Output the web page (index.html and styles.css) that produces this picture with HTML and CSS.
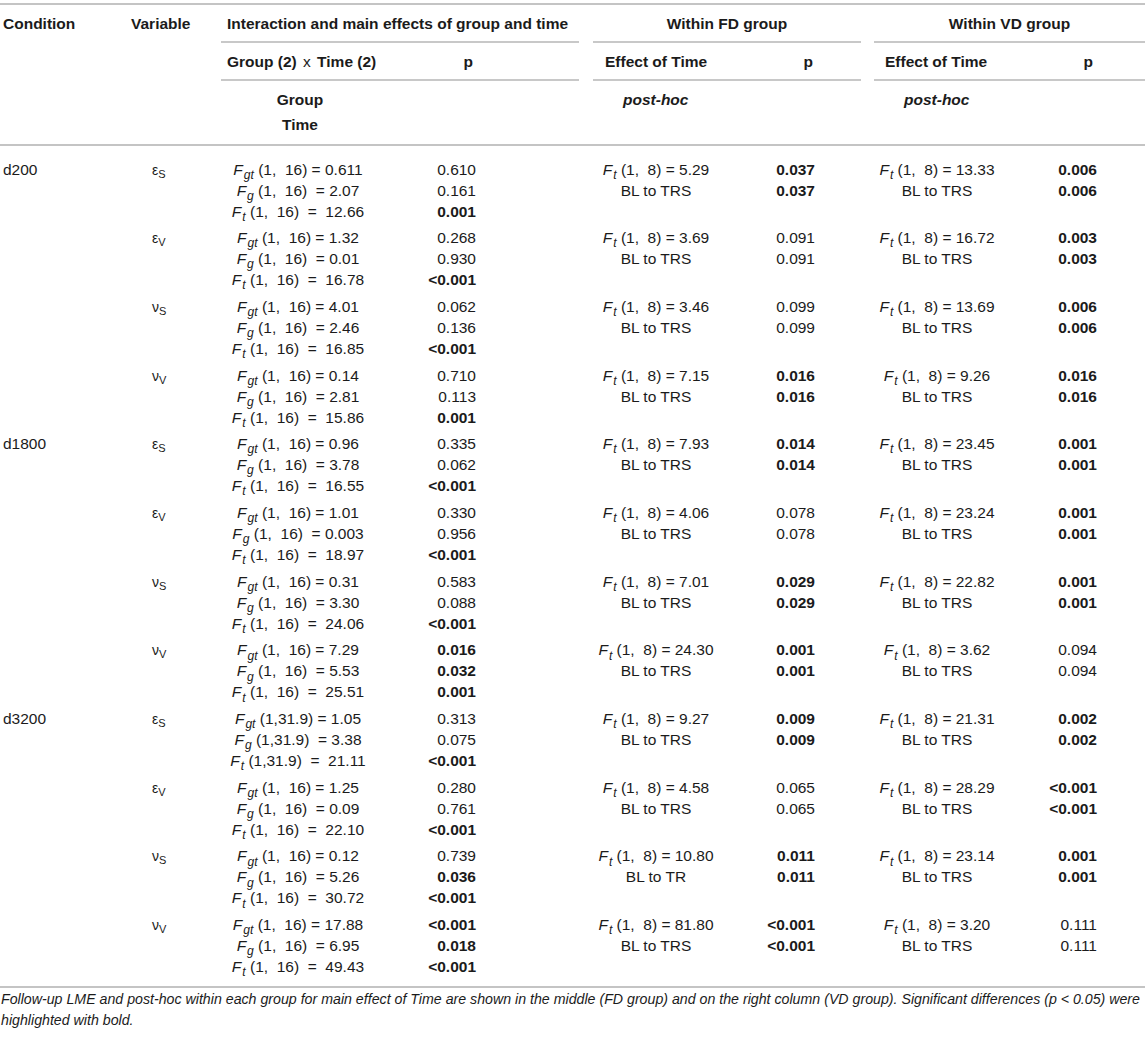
FILE: index.html
```html
<!DOCTYPE html>
<html lang="en">
<head>
<meta charset="utf-8">
<title>Table</title>
<link rel="stylesheet" href="styles.css">
</head>
<body>
<div class="page">
  <div class="cols head">
    <div class="h-cond">Condition</div>
    <div class="h-var">Variable</div>
    <div class="h-inter">Interaction and main effects of group and time</div>
    <div class="h-fd">Within FD group</div>
    <div class="h-vd">Within VD group</div>

    <div class="r2 r2-c3">Group (2) <span class="times">x</span> Time (2)</div>
    <div class="r2 r2-c4">p</div>
    <div class="r2 r2-c5">Effect of Time</div>
    <div class="r2 r2-c6">p</div>
    <div class="r2 r2-c7">Effect of Time</div>
    <div class="r2 r2-c8">p</div>

    <div class="r3 r3-c3"><div>Group</div><div>Time</div></div>
    <div class="r3 r3-c5">post-hoc</div>
    <div class="r3 r3-c7">post-hoc</div>
  </div>

  <div class="body">
    <!-- d200 -->
    <div class="cols grp">
      <div class="c1">d200</div>
      <div class="c2"><span class="sym">ε<sub>S</sub></span></div>
      <div class="c3">
        <div><i>F</i><sub>gt</sub> (1,&nbsp; 16) = 0.611</div>
        <div><i>F</i><sub>g</sub> (1,&nbsp; 16) &nbsp;= 2.07</div>
        <div><i>F</i><sub>t</sub> (1,&nbsp; 16) &nbsp;= &nbsp;12.66</div>
      </div>
      <div class="c4"><div>0.610</div><div>0.161</div><div><b>0.001</b></div></div>
      <div class="c5"><div><i>F</i><sub>t</sub> (1,&nbsp; 8) = 5.29</div><div>BL to TRS</div></div>
      <div class="c6"><div><b>0.037</b></div><div><b>0.037</b></div></div>
      <div class="c7"><div><i>F</i><sub>t</sub> (1,&nbsp; 8) = 13.33</div><div>BL to TRS</div></div>
      <div class="c8"><div><b>0.006</b></div><div><b>0.006</b></div></div>
    </div>
    <div class="cols grp">
      <div class="c1"></div>
      <div class="c2"><span class="sym">ε<sub>V</sub></span></div>
      <div class="c3">
        <div><i>F</i><sub>gt</sub> (1,&nbsp; 16) = 1.32</div>
        <div><i>F</i><sub>g</sub> (1,&nbsp; 16) &nbsp;= 0.01</div>
        <div><i>F</i><sub>t</sub> (1,&nbsp; 16) &nbsp;= &nbsp;16.78</div>
      </div>
      <div class="c4"><div>0.268</div><div>0.930</div><div><b>&lt;0.001</b></div></div>
      <div class="c5"><div><i>F</i><sub>t</sub> (1,&nbsp; 8) = 3.69</div><div>BL to TRS</div></div>
      <div class="c6"><div>0.091</div><div>0.091</div></div>
      <div class="c7"><div><i>F</i><sub>t</sub> (1,&nbsp; 8) = 16.72</div><div>BL to TRS</div></div>
      <div class="c8"><div><b>0.003</b></div><div><b>0.003</b></div></div>
    </div>
    <div class="cols grp">
      <div class="c1"></div>
      <div class="c2"><span class="sym">ν<sub>S</sub></span></div>
      <div class="c3">
        <div><i>F</i><sub>gt</sub> (1,&nbsp; 16) = 4.01</div>
        <div><i>F</i><sub>g</sub> (1,&nbsp; 16) &nbsp;= 2.46</div>
        <div><i>F</i><sub>t</sub> (1,&nbsp; 16) &nbsp;= &nbsp;16.85</div>
      </div>
      <div class="c4"><div>0.062</div><div>0.136</div><div><b>&lt;0.001</b></div></div>
      <div class="c5"><div><i>F</i><sub>t</sub> (1,&nbsp; 8) = 3.46</div><div>BL to TRS</div></div>
      <div class="c6"><div>0.099</div><div>0.099</div></div>
      <div class="c7"><div><i>F</i><sub>t</sub> (1,&nbsp; 8) = 13.69</div><div>BL to TRS</div></div>
      <div class="c8"><div><b>0.006</b></div><div><b>0.006</b></div></div>
    </div>
    <div class="cols grp">
      <div class="c1"></div>
      <div class="c2"><span class="sym">ν<sub>V</sub></span></div>
      <div class="c3">
        <div><i>F</i><sub>gt</sub> (1,&nbsp; 16) = 0.14</div>
        <div><i>F</i><sub>g</sub> (1,&nbsp; 16) &nbsp;= 2.81</div>
        <div><i>F</i><sub>t</sub> (1,&nbsp; 16) &nbsp;= &nbsp;15.86</div>
      </div>
      <div class="c4"><div>0.710</div><div>0.113</div><div><b>0.001</b></div></div>
      <div class="c5"><div><i>F</i><sub>t</sub> (1,&nbsp; 8) = 7.15</div><div>BL to TRS</div></div>
      <div class="c6"><div><b>0.016</b></div><div><b>0.016</b></div></div>
      <div class="c7"><div><i>F</i><sub>t</sub> (1,&nbsp; 8) = 9.26</div><div>BL to TRS</div></div>
      <div class="c8"><div><b>0.016</b></div><div><b>0.016</b></div></div>
    </div>

    <!-- d1800 -->
    <div class="cols grp">
      <div class="c1">d1800</div>
      <div class="c2"><span class="sym">ε<sub>S</sub></span></div>
      <div class="c3">
        <div><i>F</i><sub>gt</sub> (1,&nbsp; 16) = 0.96</div>
        <div><i>F</i><sub>g</sub> (1,&nbsp; 16) &nbsp;= 3.78</div>
        <div><i>F</i><sub>t</sub> (1,&nbsp; 16) &nbsp;= &nbsp;16.55</div>
      </div>
      <div class="c4"><div>0.335</div><div>0.062</div><div><b>&lt;0.001</b></div></div>
      <div class="c5"><div><i>F</i><sub>t</sub> (1,&nbsp; 8) = 7.93</div><div>BL to TRS</div></div>
      <div class="c6"><div><b>0.014</b></div><div><b>0.014</b></div></div>
      <div class="c7"><div><i>F</i><sub>t</sub> (1,&nbsp; 8) = 23.45</div><div>BL to TRS</div></div>
      <div class="c8"><div><b>0.001</b></div><div><b>0.001</b></div></div>
    </div>
    <div class="cols grp">
      <div class="c1"></div>
      <div class="c2"><span class="sym">ε<sub>V</sub></span></div>
      <div class="c3">
        <div><i>F</i><sub>gt</sub> (1,&nbsp; 16) = 1.01</div>
        <div><i>F</i><sub>g</sub> (1,&nbsp; 16) &nbsp;= 0.003</div>
        <div><i>F</i><sub>t</sub> (1,&nbsp; 16) &nbsp;= &nbsp;18.97</div>
      </div>
      <div class="c4"><div>0.330</div><div>0.956</div><div><b>&lt;0.001</b></div></div>
      <div class="c5"><div><i>F</i><sub>t</sub> (1,&nbsp; 8) = 4.06</div><div>BL to TRS</div></div>
      <div class="c6"><div>0.078</div><div>0.078</div></div>
      <div class="c7"><div><i>F</i><sub>t</sub> (1,&nbsp; 8) = 23.24</div><div>BL to TRS</div></div>
      <div class="c8"><div><b>0.001</b></div><div><b>0.001</b></div></div>
    </div>
    <div class="cols grp">
      <div class="c1"></div>
      <div class="c2"><span class="sym">ν<sub>S</sub></span></div>
      <div class="c3">
        <div><i>F</i><sub>gt</sub> (1,&nbsp; 16) = 0.31</div>
        <div><i>F</i><sub>g</sub> (1,&nbsp; 16) &nbsp;= 3.30</div>
        <div><i>F</i><sub>t</sub> (1,&nbsp; 16) &nbsp;= &nbsp;24.06</div>
      </div>
      <div class="c4"><div>0.583</div><div>0.088</div><div><b>&lt;0.001</b></div></div>
      <div class="c5"><div><i>F</i><sub>t</sub> (1,&nbsp; 8) = 7.01</div><div>BL to TRS</div></div>
      <div class="c6"><div><b>0.029</b></div><div><b>0.029</b></div></div>
      <div class="c7"><div><i>F</i><sub>t</sub> (1,&nbsp; 8) = 22.82</div><div>BL to TRS</div></div>
      <div class="c8"><div><b>0.001</b></div><div><b>0.001</b></div></div>
    </div>
    <div class="cols grp">
      <div class="c1"></div>
      <div class="c2"><span class="sym">ν<sub>V</sub></span></div>
      <div class="c3">
        <div><i>F</i><sub>gt</sub> (1,&nbsp; 16) = 7.29</div>
        <div><i>F</i><sub>g</sub> (1,&nbsp; 16) &nbsp;= 5.53</div>
        <div><i>F</i><sub>t</sub> (1,&nbsp; 16) &nbsp;= &nbsp;25.51</div>
      </div>
      <div class="c4"><div><b>0.016</b></div><div><b>0.032</b></div><div><b>0.001</b></div></div>
      <div class="c5"><div><i>F</i><sub>t</sub> (1,&nbsp; 8) = 24.30</div><div>BL to TRS</div></div>
      <div class="c6"><div><b>0.001</b></div><div><b>0.001</b></div></div>
      <div class="c7"><div><i>F</i><sub>t</sub> (1,&nbsp; 8) = 3.62</div><div>BL to TRS</div></div>
      <div class="c8"><div>0.094</div><div>0.094</div></div>
    </div>

    <!-- d3200 -->
    <div class="cols grp">
      <div class="c1">d3200</div>
      <div class="c2"><span class="sym">ε<sub>S</sub></span></div>
      <div class="c3">
        <div><i>F</i><sub>gt</sub> (1,31.9) = 1.05</div>
        <div><i>F</i><sub>g</sub> (1,31.9) &nbsp;= 3.38</div>
        <div><i>F</i><sub>t</sub> (1,31.9) &nbsp;= &nbsp;21.11</div>
      </div>
      <div class="c4"><div>0.313</div><div>0.075</div><div><b>&lt;0.001</b></div></div>
      <div class="c5"><div><i>F</i><sub>t</sub> (1,&nbsp; 8) = 9.27</div><div>BL to TRS</div></div>
      <div class="c6"><div><b>0.009</b></div><div><b>0.009</b></div></div>
      <div class="c7"><div><i>F</i><sub>t</sub> (1,&nbsp; 8) = 21.31</div><div>BL to TRS</div></div>
      <div class="c8"><div><b>0.002</b></div><div><b>0.002</b></div></div>
    </div>
    <div class="cols grp">
      <div class="c1"></div>
      <div class="c2"><span class="sym">ε<sub>V</sub></span></div>
      <div class="c3">
        <div><i>F</i><sub>gt</sub> (1,&nbsp; 16) = 1.25</div>
        <div><i>F</i><sub>g</sub> (1,&nbsp; 16) &nbsp;= 0.09</div>
        <div><i>F</i><sub>t</sub> (1,&nbsp; 16) &nbsp;= &nbsp;22.10</div>
      </div>
      <div class="c4"><div>0.280</div><div>0.761</div><div><b>&lt;0.001</b></div></div>
      <div class="c5"><div><i>F</i><sub>t</sub> (1,&nbsp; 8) = 4.58</div><div>BL to TRS</div></div>
      <div class="c6"><div>0.065</div><div>0.065</div></div>
      <div class="c7"><div><i>F</i><sub>t</sub> (1,&nbsp; 8) = 28.29</div><div>BL to TRS</div></div>
      <div class="c8"><div><b>&lt;0.001</b></div><div><b>&lt;0.001</b></div></div>
    </div>
    <div class="cols grp">
      <div class="c1"></div>
      <div class="c2"><span class="sym">ν<sub>S</sub></span></div>
      <div class="c3">
        <div><i>F</i><sub>gt</sub> (1,&nbsp; 16) = 0.12</div>
        <div><i>F</i><sub>g</sub> (1,&nbsp; 16) &nbsp;= 5.26</div>
        <div><i>F</i><sub>t</sub> (1,&nbsp; 16) &nbsp;= &nbsp;30.72</div>
      </div>
      <div class="c4"><div>0.739</div><div><b>0.036</b></div><div><b>&lt;0.001</b></div></div>
      <div class="c5"><div><i>F</i><sub>t</sub> (1,&nbsp; 8) = 10.80</div><div>BL to TR</div></div>
      <div class="c6"><div><b>0.011</b></div><div><b>0.011</b></div></div>
      <div class="c7"><div><i>F</i><sub>t</sub> (1,&nbsp; 8) = 23.14</div><div>BL to TRS</div></div>
      <div class="c8"><div><b>0.001</b></div><div><b>0.001</b></div></div>
    </div>
    <div class="cols grp">
      <div class="c1"></div>
      <div class="c2"><span class="sym">ν<sub>V</sub></span></div>
      <div class="c3">
        <div><i>F</i><sub>gt</sub> (1,&nbsp; 16) = 17.88</div>
        <div><i>F</i><sub>g</sub> (1,&nbsp; 16) &nbsp;= 6.95</div>
        <div><i>F</i><sub>t</sub> (1,&nbsp; 16) &nbsp;= &nbsp;49.43</div>
      </div>
      <div class="c4"><div><b>&lt;0.001</b></div><div><b>0.018</b></div><div><b>&lt;0.001</b></div></div>
      <div class="c5"><div><i>F</i><sub>t</sub> (1,&nbsp; 8) = 81.80</div><div>BL to TRS</div></div>
      <div class="c6"><div><b>&lt;0.001</b></div><div><b>&lt;0.001</b></div></div>
      <div class="c7"><div><i>F</i><sub>t</sub> (1,&nbsp; 8) = 3.20</div><div>BL to TRS</div></div>
      <div class="c8"><div>0.111</div><div>0.111</div></div>
    </div>
  </div>

  <div class="foot">Follow-up LME and post-hoc within each group for main effect of Time are shown in the middle (FD group) and on the right column (VD group). Significant differences (p &lt; 0.05) were highlighted with bold.</div>
</div>
</body>
</html>
```

FILE: styles.css
```css
html, body {
  margin: 0;
  padding: 0;
  background: #ffffff;
}

body {
  color: #1b1b1b;
  font-family: "Liberation Sans", Arial, Helvetica, sans-serif;
  font-size: 15.5px;
}

.page {
  width: 1145px;
  padding-top: 3px;
}

.cols {
  display: grid;
  grid-template-columns: 128px 93px 154px 210px 142px 140px 140px 138px;
}

/* ---------- header ---------- */
.head {
  border-top: 2px solid #c4c4c4;
  border-bottom: 2px solid #c4c4c4;
  font-weight: bold;
  line-height: 20px;
  white-space: nowrap;
}

.h-cond {
  grid-column: 1;
  grid-row: 1 / 4;
  padding: 9px 0 0 3px;
}

.h-var {
  grid-column: 2;
  grid-row: 1 / 4;
  padding: 9px 0 0 3px;
}

.h-inter,
.h-fd,
.h-vd {
  grid-row: 1;
  padding-top: 9px;
  padding-bottom: 7px;
  border-bottom: 2px solid #c8c8c8;
}

.h-inter {
  grid-column: 3 / 5;
  margin-right: 6px;
  padding-left: 6px;
}

.h-fd {
  grid-column: 5 / 7;
  margin: 0 6px 0 8px;
  text-align: center;
}

.h-vd {
  grid-column: 7 / 9;
  margin-left: 7px;
  text-align: center;
}

.r2 {
  grid-row: 2;
  padding-top: 9px;
  padding-bottom: 7px;
  border-bottom: 2px solid #c8c8c8;
}

.r2-c3 { grid-column: 3; padding-left: 6px; }
.r2-c4 { grid-column: 4; margin-right: 6px; padding-right: 106px; text-align: right; }
.r2-c5 { grid-column: 5; margin-left: 8px; padding-left: 12px; }
.r2-c6 { grid-column: 6; margin-right: 6px; padding-right: 48px; text-align: right; }
.r2-c7 { grid-column: 7; margin-left: 7px; padding-left: 11px; }
.r2-c8 { grid-column: 8; padding-right: 52px; text-align: right; }

.times {
  font-weight: normal;
  padding: 0 2px;
}

.r3 {
  grid-row: 3;
  padding-top: 6px;
  padding-bottom: 7px;
  line-height: 25px;
}

.r3-c3 { grid-column: 3; padding-left: 4px; text-align: center; }
.r3-c5 { grid-column: 5 / 7; padding-left: 38px; font-style: italic; }
.r3-c7 { grid-column: 7 / 9; padding-left: 37px; font-style: italic; }

/* ---------- body ---------- */
.body {
  padding-top: 12.5px;
  padding-bottom: 2.8px;
  white-space: nowrap;
}

.grp {
  line-height: 21px;
  padding-bottom: 5.7px;
}

.c1 { padding-left: 3px; }
.c2 { padding-left: 24px; }
.c3 { text-align: center; }
.c4 { text-align: right; padding-right: 109px; }
.c5 { text-align: center; }
.c6 { text-align: right; padding-right: 52px; }
.c7 { text-align: center; }
.c8 { text-align: right; padding-right: 48px; }

.sym {
  font-size: 14px;
}

.sym sub {
  font-size: 11px;
  vertical-align: -3px;
  line-height: 0;
}

.c3 sub,
.c5 sub,
.c7 sub {
  font-size: 0.78em;
  font-style: italic;
  vertical-align: -0.35em;
  line-height: 0;
  padding-left: 1px;
}

.c3 i,
.c5 i,
.c7 i {
  font-style: italic;
}

b {
  font-weight: bold;
}

/* ---------- footer ---------- */
.foot {
  border-top: 2px solid #c4c4c4;
  padding-top: 1.5px;
  padding-left: 1px;
  font-size: 14.2px;
  line-height: 21px;
  font-style: italic;
}
```
